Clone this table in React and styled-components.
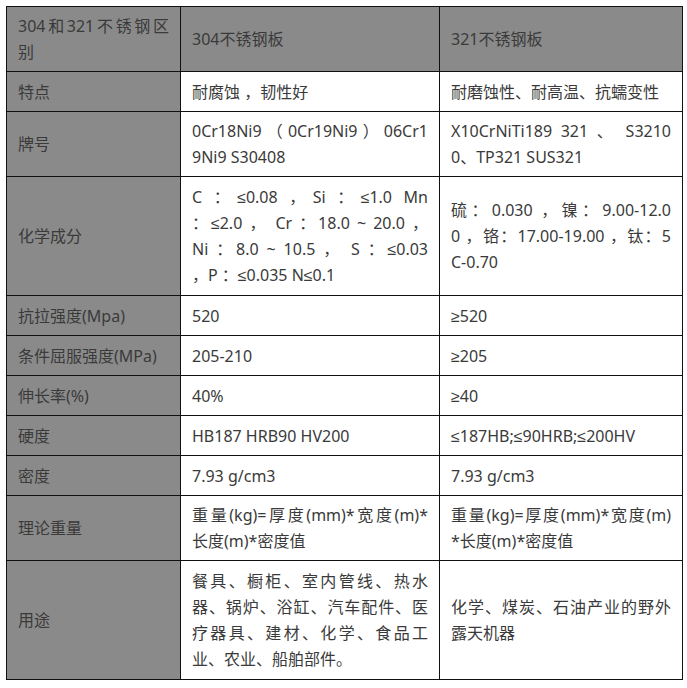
import React from "react";
import styled, { createGlobalStyle } from "styled-components";

const GlobalStyle = createGlobalStyle`
  body {
    margin: 0;
    background: #fff;
  }
`;

const Page = styled.div`
  padding: 6px 0 0 6px;
`;

const Table = styled.table`
  width: 677px;
  table-layout: fixed;
  border-collapse: collapse;
  font-family: "Noto Sans", "Liberation Sans", "Noto Sans CJK SC", sans-serif;
  font-size: 16px;
  line-height: 26px;
  color: #3a3a3a;
`;

const Row = styled.tr`
  height: ${(props) => props.$h}px;
`;

const Cell = styled.td`
  border: 1px solid #111;
  padding: 6px 11px 6px 11px;
  vertical-align: middle;
  background: ${(props) => (props.$shade ? "#8a8a8a" : "#fff")};
  word-break: break-all;
`;

const Line = styled.span`
  display: block;
  white-space: nowrap;
  text-align: ${(props) => (props.$fill ? "justify" : "left")};
  text-align-last: ${(props) => (props.$fill ? "justify" : "left")};
`;

const rows = [
  {
    h: 65,
    head: true,
    label: ["304和321不锈钢区", "别"],
    a: ["304不锈钢板"],
    b: ["321不锈钢板"],
  },
  { h: 40, label: ["特点"], a: ["耐腐蚀 ，韧性好"], b: ["耐磨蚀性、耐高温、抗蠕变性"] },
  {
    h: 65,
    label: ["牌号"],
    a: ["0Cr18Ni9（0Cr19Ni9）06Cr1", "9Ni9 S30408"],
    b: ["X10CrNiTi189 321 、 S3210", "0、TP321 SUS321"],
  },
  {
    h: 119,
    label: ["化学成分"],
    a: [
      "C ：≤0.08 ，Si ：≤1.0 Mn",
      "：≤2.0 ， Cr ：18.0 ~ 20.0 ，",
      "Ni ：8.0 ~ 10.5 ， S ：≤0.03",
      "，P ：≤0.035 N≤0.1",
    ],
    b: ["硫：0.030 ，镍：9.00-12.0", "0 ，铬：17.00-19.00 ，钛：5", "C-0.70"],
  },
  { h: 40, label: ["抗拉强度(Mpa)"], a: ["520"], b: ["≥520"] },
  { h: 40, label: ["条件屈服强度(MPa)"], a: ["205-210"], b: ["≥205"] },
  { h: 40, label: ["伸长率(%)"], a: ["40%"], b: ["≥40"] },
  { h: 40, label: ["硬度"], a: ["HB187 HRB90 HV200"], b: ["≤187HB;≤90HRB;≤200HV"] },
  { h: 40, label: ["密度"], a: ["7.93 g/cm3"], b: ["7.93 g/cm3"] },
  {
    h: 65,
    label: ["理论重量"],
    a: ["重量(kg)=厚度(mm)*宽度(m)*", "长度(m)*密度值"],
    b: ["重量(kg)=厚度(mm)*宽度(m)", "*长度(m)*密度值"],
  },
  {
    h: 119,
    label: ["用途"],
    a: [
      "餐具、橱柜、室内管线、热水",
      "器、锅炉、浴缸、汽车配件、医",
      "疗器具、建材、化学、食品工",
      "业、农业、船舶部件。",
    ],
    b: ["化学、煤炭、石油产业的野外", "露天机器"],
  },
];

function Lines({ lines }) {
  return lines.map((text, i) => (
    <Line key={i} $fill={i < lines.length - 1}>
      {text}
    </Line>
  ));
}

function App() {
  return (
    <Page>
      <GlobalStyle />
      <Table>
        <colgroup>
          <col style={{ width: 174 }} />
          <col style={{ width: 259 }} />
          <col style={{ width: 243 }} />
        </colgroup>
        <tbody>
          {rows.map((row, i) => (
            <Row key={i} $h={row.h}>
              <Cell $shade>
                <Lines lines={row.label} />
              </Cell>
              <Cell $shade={row.head}>
                <Lines lines={row.a} />
              </Cell>
              <Cell $shade={row.head}>
                <Lines lines={row.b} />
              </Cell>
            </Row>
          ))}
        </tbody>
      </Table>
    </Page>
  );
}

export default App;
